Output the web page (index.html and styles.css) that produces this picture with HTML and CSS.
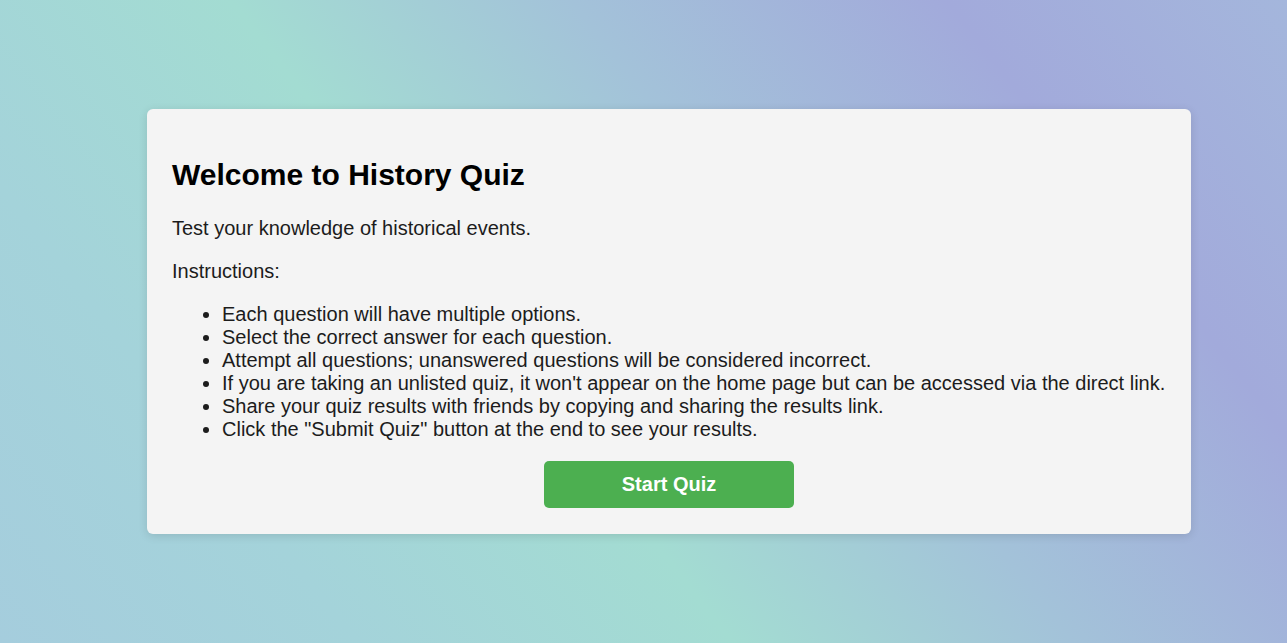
FILE: index.html
```html
<!DOCTYPE html>
<html lang="en">
<head>
<meta charset="utf-8">
<title>History Quiz</title>
<link rel="stylesheet" href="styles.css">
</head>
<body>
  <main class="card">
    <h2 class="title">Welcome to History Quiz</h2>
    <p class="text">Test your knowledge of historical events.</p>
    <p class="text">Instructions:</p>
    <ul class="rules">
      <li>Each question will have multiple options.</li>
      <li>Select the correct answer for each question.</li>
      <li>Attempt all questions; unanswered questions will be considered incorrect.</li>
      <li>If you are taking an unlisted quiz, it won't appear on the home page but can be accessed via the direct link.</li>
      <li>Share your quiz results with friends by copying and sharing the results link.</li>
      <li>Click the "Submit Quiz" button at the end to see your results.</li>
    </ul>
    <div class="actions">
      <button class="start-btn" type="button">Start Quiz</button>
    </div>
  </main>
</body>
</html>
```

FILE: styles.css
```css
* {
  box-sizing: border-box;
}

html, body {
  height: 100%;
}

body {
  margin: 0;
  min-height: 100vh;
  display: flex;
  align-items: center;
  padding-left: 147px;
  font-family: "Liberation Sans", Arial, sans-serif;
  font-size: 20px;
  color: #1c1c1c;
  background: linear-gradient(52deg, #a5cddd 0%, #a4d3da 20%, #a3dcd2 41%, #a3c2d9 60%, #a2aadb 81%, #a4b6dc 100%);
}

.card {
  width: 1044px;
  background: #f4f4f4;
  border-radius: 6px;
  box-shadow: 0 2px 10px rgba(0, 0, 0, 0.12);
  padding: 20px 25px 26px;
}

.title {
  font-size: 30px;
  font-weight: bold;
  color: #000;
  margin: 29px 0 25px;
}

.text {
  margin: 20px 0;
  line-height: 23px;
}

.rules {
  margin: 20px 0;
  padding-left: 50px;
  line-height: 23px;
}

.actions {
  display: flex;
  justify-content: center;
}

.start-btn {
  width: 250px;
  height: 47px;
  border: none;
  border-radius: 5px;
  background: #4caf50;
  color: #fff;
  font-family: "Liberation Sans", Arial, sans-serif;
  font-size: 20px;
  font-weight: bold;
  cursor: pointer;
}
```
